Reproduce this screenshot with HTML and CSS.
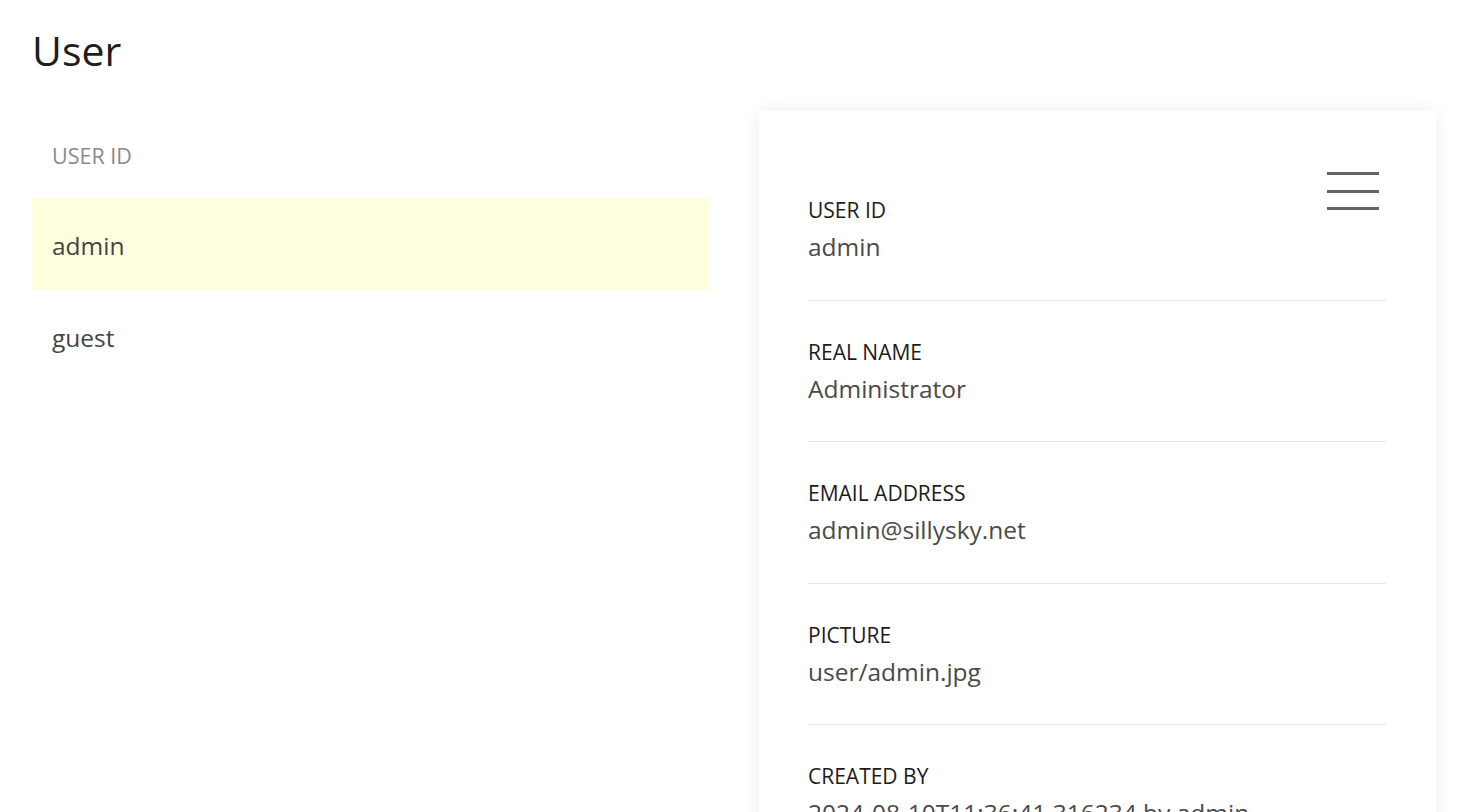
FILE: index.html
```html
<!DOCTYPE html>
<html lang="en">
<head>
<meta charset="utf-8">
<title>User</title>
<link rel="stylesheet" href="styles.css">
</head>
<body>
<div class="page">
  <h1 class="title">User</h1>
  <div class="layout">
    <div class="list">
      <div class="list-head">USER ID</div>
      <div class="list-row selected">admin</div>
      <div class="list-row">guest</div>
    </div>
    <div class="card">
      <button class="menu-btn" aria-label="Menu">
        <span class="bar"></span><span class="bar"></span><span class="bar"></span>
      </button>
      <div class="field">
        <div class="label">USER ID</div>
        <div class="value">admin</div>
      </div>
      <div class="field">
        <div class="label">REAL NAME</div>
        <div class="value">Administrator</div>
      </div>
      <div class="field">
        <div class="label">EMAIL ADDRESS</div>
        <div class="value">admin@sillysky.net</div>
      </div>
      <div class="field">
        <div class="label">PICTURE</div>
        <div class="value">user/admin.jpg</div>
      </div>
      <div class="field">
        <div class="label">CREATED BY</div>
        <div class="value">2024-08-10T11:36:41.316234 by admin</div>
      </div>
    </div>
  </div>
</div>
</body>
</html>
```
FILE: styles.css
```css
* { box-sizing: border-box; }
html, body { margin: 0; padding: 0; background: #ffffff; }
body {
  font-family: "Open Sans", "Noto Sans", sans-serif;
  color: #222;
  overflow: hidden;
  height: 812px;
}
.page { padding: 21px 0 0 32px; }
.title {
  margin: 0;
  font-size: 41px;
  font-weight: 400;
  line-height: 58px;
  color: #1e1e1e;
}
.layout {
  display: grid;
  grid-template-columns: 677px 677px;
  column-gap: 50px;
  margin-top: 32px;
  align-items: start;
}
.list { display: flex; flex-direction: column; margin-top: -5px; }
.list-head, .list-row {
  height: 92px;
  display: flex;
  align-items: center;
  padding-left: 20px;
}
.list-head { font-size: 21.5px; color: #8a8a8a; padding-top: 6px; }
.list-row { font-size: 24.5px; color: #444; padding-top: 2px; }
.list-row.selected { background: #ffffdf; }
.card {
  position: relative;
  background: #fff;
  box-shadow: 0 0 18px rgba(0, 0, 0, 0.07);
  padding: 48px 50px 40px 49px;
  min-height: 760px;
}
.menu-btn {
  position: absolute;
  top: 61px;
  right: 56px;
  width: 54px;
  height: 38px;
  border: 0;
  background: transparent;
  display: flex;
  flex-direction: column;
  justify-content: space-between;
  padding: 0 1px;
}
.bar { display: block; height: 3px; background: #666; width: 52px; }
.field {
  padding: 36px 0 32.4px;
  border-bottom: 1px solid #e6e6e6;
}
.field:first-of-type { padding-bottom: 33px; }
.label { font-size: 21px; line-height: 31px; color: #1c1c1c; }
.value { font-size: 24.5px; line-height: 41px; color: #4a4a4a; }
```
